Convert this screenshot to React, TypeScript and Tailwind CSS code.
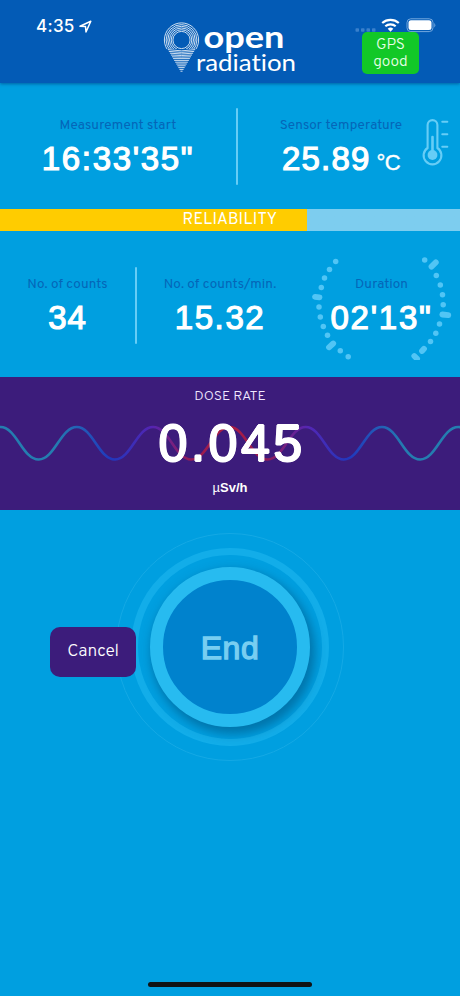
import React from 'react';

interface ReadingProps {
  label: string;
  value: string;
  unit?: string;
  className?: string;
  labelClass?: string;
  valueClass?: string;
}

const Reading: React.FC<ReadingProps> = ({ label, value, unit, className = '', labelClass = '', valueClass = '' }) => (
  <div className={`flex flex-col items-center whitespace-nowrap ${className}`}>
    <div className={`text-[13.5px] leading-4 text-[#0566b8] ${labelClass}`}>{label}</div>
    <div className="mt-[9px] flex h-8 items-baseline font-['Liberation_Sans',sans-serif] text-white">
      <span className={`text-[33px] leading-8 [-webkit-text-stroke:1.2px_white] ${valueClass}`}>{value}</span>
      {unit && <span className="ml-1.5 text-[22px] leading-8 tracking-tight [-webkit-text-stroke:0.4px_white]">{unit}</span>}
    </div>
  </div>
);

const Divider = () => <div className="h-[77px] w-0.5 shrink-0 rounded-full bg-[#66cdf6]" />;

const Logo = () => {
  const rings = [8.6, 10.3, 12, 13.7, 15.4, 17.1];
  const lines = Array.from({ length: 13 }, (_, i) => i);
  return (
    <svg width="136" height="56" viewBox="0 0 136 56" fill="none" stroke="white">
      <clipPath id="pin-head">
        <path d="M0 0h38v28H0z" />
      </clipPath>
      <g clipPath="url(#pin-head)">
        {rings.map((r) => (
          <circle key={r} cx="18.5" cy="19" r={r} strokeWidth="0.8" />
        ))}
      </g>
      {lines.map((i) => {
        const y = 28.6 + i * 1.8;
        const half = (52 - y) * 0.585;
        return <path key={i} d={`M${18.5 - half} ${y}Q18.5 ${y + Math.max(0, 2.5 - i * 0.5)} ${18.5 + half} ${y}`} strokeWidth="0.8" />;
      })}
      <g fill="white" fontFamily="Lato, sans-serif" style={{ fontVariantLigatures: 'none' }}>
        <text x="40.5" y="27" fontSize="30" fontWeight="700" stroke="none" textLength="81" lengthAdjust="spacingAndGlyphs">open</text>
        <text x="33" y="49.5" fontSize="24" stroke="none" textLength="100" lengthAdjust="spacingAndGlyphs">radiation</text>
      </g>
    </svg>
  );
};

const StatusIcons = () => (
  <svg width="82" height="16" viewBox="0 0 82 16" fill="none">
    {[1.5, 7, 12.5, 18].map((x) => (
      <rect key={x} x={x} y="11.3" width="3.5" height="3.5" rx="0.8" fill="#3a80cc" />
    ))}
    <g stroke="white" strokeWidth="2.2">
      <path d="M28.2 6a12.5 12.5 0 0 1 16.6 0" />
      <path d="M31.3 9.3a7.8 7.8 0 0 1 10.4 0" />
    </g>
    <path d="M33.7 11.8a4.2 4.2 0 0 1 5.6 0L36.5 14.8z" fill="white" />
    <rect x="53" y="1.8" width="26" height="12.8" rx="3.8" stroke="#74a8de" />
    <rect x="54.5" y="3.3" width="23" height="9.8" rx="2.5" fill="white" />
    <path d="M80.3 6q2 2.2 0 4.6z" fill="#74a8de" />
  </svg>
);

const Thermometer = () => (
  <svg width="28" height="52" viewBox="0 0 28 52" fill="none" stroke="#66cdf6" strokeLinecap="round">
    <path d="M6.6 31V8a4.9 4.9 0 0 1 9.8 0V31a8.9 8.9 0 1 1-9.8 0z" strokeWidth="2.1" />
    <path d="M11.5 20v18" strokeWidth="2.6" />
    <circle cx="11.5" cy="38" r="4.9" fill="#66cdf6" stroke="none" />
    <path d="M21.3 4.7h5M21.3 17.2h5M21.3 29.7h5" strokeWidth="2.1" />
  </svg>
);

const dialDots = [
  [25.7, 6.5], [19.5, 14.5], [14.5, 23], [11.3, 32.5], [9, 52], [10.3, 62], [13.3, 71.5], [17.5, 80.3], [30.3, 95.7],
  [38.2, 101.8], [114.7, 5], [126.3, 20.5], [130.3, 30], [132.5, 39.7], [133.2, 49.7], [129.5, 69], [125.8, 78.3], [120.5, 86.5],
];

const Dial = () => (
  <svg width="145" height="105" viewBox="0 0 145 105" className="absolute top-6 left-[310px]" fill="#51c5f5" stroke="#51c5f5">
    {dialDots.map(([x, y]) => (
      <circle key={`${x}-${y}`} cx={x} cy={y} r="2.75" stroke="none" />
    ))}
    <path d="M5 41.8l4.5.5M19 92.3l4.2-3.8M121.5 11.6l4.3-4.2M132.3 59.5l6 .7M112 96l2-2.2M104.3 101l2.8 2.8" strokeWidth="5.8" strokeLinecap="round" />
  </svg>
);

const PERIOD = 76.3;

// Alternating half periods, each one a smooth cubic between a crest and a trough
const wavePath = () => {
  let d = `M${0.5 - PERIOD / 2} 34.5`;
  for (let i = 0; i < 14; i++) {
    const x = 0.5 - PERIOD / 2 + (i * PERIOD) / 2;
    const from = i % 2 === 0 ? 34.5 : 2;
    const to = i % 2 === 0 ? 2 : 34.5;
    d += `C${x + 16} ${from} ${x + 22} ${to} ${x + PERIOD / 2} ${to}`;
  }
  return d;
};

const Wave = () => (
  <svg width="460" height="38" viewBox="0 0 460 38" className="absolute top-[48px] left-0" fill="none">
    <defs>
      <linearGradient id="wave" gradientUnits="userSpaceOnUse" x1="0" x2="460" y1="0" y2="0">
        <stop offset="0" stopColor="#247db0" />
        <stop offset="0.12" stopColor="#247db0" />
        <stop offset="0.24" stopColor="#2038bd" />
        <stop offset="0.33" stopColor="#5424b2" />
        <stop offset="0.41" stopColor="#941c58" />
        <stop offset="0.5" stopColor="#ad1c40" />
        <stop offset="0.58" stopColor="#911c57" />
        <stop offset="0.67" stopColor="#5426b4" />
        <stop offset="0.76" stopColor="#2038bd" />
        <stop offset="0.88" stopColor="#247db0" />
        <stop offset="1" stopColor="#247db0" />
      </linearGradient>
    </defs>
    <path d={wavePath()} stroke="url(#wave)" strokeWidth="2.6" />
  </svg>
);

export default function App() {
  return (
    <div className="flex h-[996px] w-[460px] flex-col overflow-hidden bg-[#009fe0] font-['Overpass','Roboto',sans-serif]">
      <header className="relative z-10 flex h-[83px] shrink-0 bg-[#035bb6] shadow-[0_1px_3px_rgba(0,60,120,0.6)]">
        <div className="flex h-[36px] w-[163px] items-center gap-1 pt-4 pl-9 text-white">
          <span className="font-['Inter',sans-serif] text-[17px] leading-5 font-medium tracking-[0.3px]">4:35</span>
          <svg width="13" height="13" viewBox="0 0 13 13" fill="none" stroke="white" strokeWidth="1.5" strokeLinejoin="round">
            <path d="M1 6.2L11.8 1.2L7 12L6.5 6.6z" />
          </svg>
        </div>
        <div className="pt-[21px]">
          <Logo />
        </div>
        <div className="ml-auto w-[106px] pt-[17px]">
          <StatusIcons />
        </div>
        <div className="absolute top-8 left-[362px] h-[42px] w-[57px] rounded-[5px] bg-[#12c827] pt-[5px] text-center text-[15.5px] leading-[17px] font-light tracking-[-0.1px] text-[#e9ffea]">
          GPS
          <br />
          good
        </div>
      </header>

      <section className="flex h-[126px] shrink-0 items-start pt-[25px]">
        <Reading label="Measurement start" value={`16:33'35"`} className="w-[236px] pt-[10px]" labelClass="tracking-[0.1px]" valueClass="tracking-[1.7px]" />
        <Divider />
        <Reading label="Sensor temperature" value="25.89" unit="°C" className="w-[206px] pt-[10px]" labelClass="tracking-[0.1px]" valueClass="tracking-[1.2px]" />
        <div className="-ml-[23px] pt-[9px]">
          <Thermometer />
        </div>
      </section>

      <div className="flex h-[22px] shrink-0 items-center justify-center bg-linear-to-r from-[#ffcc00] from-[307px] to-[#7dcdef] to-[307px] text-[16px] leading-5 tracking-[0.3px] text-white">
        RELIABILITY
      </div>

      <section className="relative flex h-[146px] shrink-0 items-start pt-9">
        <Dial />
        <Reading label="No. of counts" value="34" className="w-[135px] pt-[10px]" labelClass="tracking-[0.1px]" valueClass="tracking-[1px]" />
        <Divider />
        <Reading label="No. of counts/min." value="15.32" className="w-[166px] pt-[10px]" labelClass="tracking-[0.1px]" valueClass="tracking-[1.6px]" />
        <Reading label="Duration" value={`02'13"`} className="relative w-[157px] pt-[10px]" labelClass="tracking-[0.1px]" valueClass="tracking-[1.8px]" />
      </section>

      <section className="relative flex h-[133px] shrink-0 flex-col items-center bg-[#3c1c7b] pt-3 text-white">
        <Wave />
        <div className="relative text-[14px] leading-4 font-light tracking-[-0.1px] text-[#f0e8ff]">DOSE RATE</div>
        <div className="relative mt-3 pl-1 font-['Liberation_Sans',sans-serif] text-[52px] leading-[52px] tracking-[3.4px] [-webkit-text-stroke:1px_white] [text-shadow:1px_0_white,-1px_0_white,0_1px_white,0_-1px_white]">
          0.045
        </div>
        <div className="relative mt-[11px] font-['Liberation_Sans',sans-serif] text-[13px] leading-4 font-bold">
          <span className="font-normal">µ</span>Sv/h
        </div>
      </section>

      <main className="relative flex flex-1 flex-col items-center pt-[23px]">
        <div className="flex size-[228px] items-center justify-center rounded-full border border-[#14a9e5]">
          <div className="flex size-[198px] items-center justify-center rounded-full border-[7px] border-[#12ade9]">
            <button className="size-[160px] rounded-full border-[13px] border-[#27bbf0] bg-[#0082cd] pt-0.5 font-['Liberation_Sans',sans-serif] text-[32px] tracking-[0.6px] text-[#78cef1] shadow-[3px_5px_10px_2px_rgba(0,75,120,0.5)] [-webkit-text-stroke:1.3px_#78cef1]">
              End
            </button>
          </div>
        </div>
        <button className="absolute top-[117px] left-[50px] h-[50px] w-[86px] rounded-[10px] bg-[#3c1c7b] text-[17.5px] font-light tracking-[-0.3px] text-white">
          Cancel
        </button>
        <div className="mt-auto mb-[9px] h-[5px] w-[164px] rounded-full bg-[#101315]" />
      </main>
    </div>
  );
}
